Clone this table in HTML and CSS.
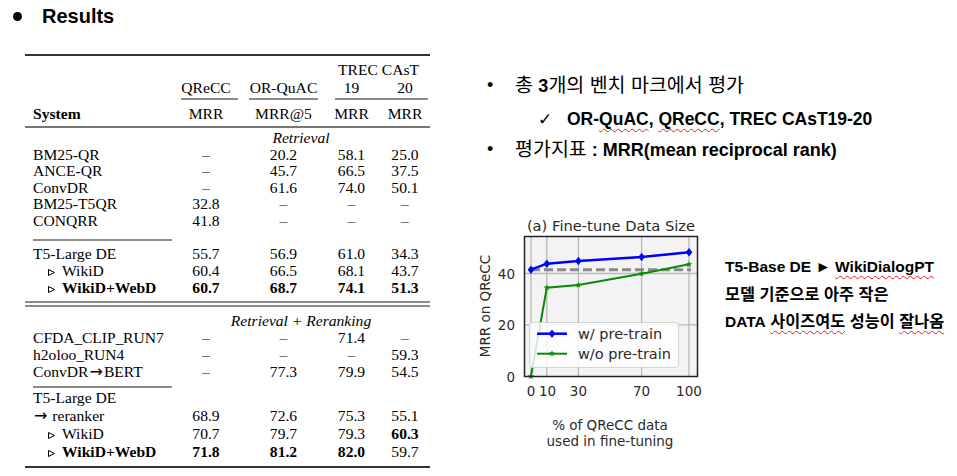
FILE: index.html
```html
<!DOCTYPE html>
<html lang="ko">
<head>
<meta charset="utf-8">
<title>Results</title>
<link rel="stylesheet" href="styles.css">
</head>
<body>
<header class="title"><span class="dot"></span><h1>Results</h1></header>
<main class="main">
  <section class="tbl">
    <div class="row hdr1"><span></span><span></span><span></span><span class="span2">TREC CAsT</span></div>
    <div class="row hdr2"><span></span><span>QReCC</span><span>OR-QuAC</span><span>19</span><span>20</span></div>
    <div class="row cmid"><span></span><i class="c2"></i><i class="c3"></i><i class="c45"></i></div>
    <div class="row hdr3"><b>System</b><span>MRR</span><span>MRR@5</span><span>MRR</span><span>MRR</span></div>

    <div class="sec sec1">
      <div class="row"><span></span><em class="grp">Retrieval</em></div>
      <div class="row"><span>BM25-QR</span><span>–</span><span>20.2</span><span>58.1</span><span>25.0</span></div>
      <div class="row"><span>ANCE-QR</span><span>–</span><span>45.7</span><span>66.5</span><span>37.5</span></div>
      <div class="row"><span>ConvDR</span><span>–</span><span>61.6</span><span>74.0</span><span>50.1</span></div>
      <div class="row"><span>BM25-T5QR</span><span>32.8</span><span>–</span><span>–</span><span>–</span></div>
      <div class="row"><span>CONQRR</span><span>41.8</span><span>–</span><span>–</span><span>–</span></div>
    </div>
    <div class="subrule r1"></div>
    <div class="sec sec2">
      <div class="row"><span>T5-Large DE</span><span>55.7</span><span>56.9</span><span>61.0</span><span>34.3</span></div>
      <div class="row"><span class="sub"><svg class="tri" width="7" height="7" viewBox="0 0 7 7"><polygon points="0.5,0.5 6.5,3.5 0.5,6.5"/></svg>WikiD</span><span>60.4</span><span>66.5</span><span>68.1</span><span>43.7</span></div>
      <div class="row bold"><span class="sub"><svg class="tri" width="7" height="7" viewBox="0 0 7 7"><polygon points="0.5,0.5 6.5,3.5 0.5,6.5"/></svg>WikiD+WebD</span><span>60.7</span><span>68.7</span><span>74.1</span><span>51.3</span></div>
    </div>
    <div class="dbl"></div>
    <div class="sec sec3">
      <div class="row"><span></span><em class="grp">Retrieval + Reranking</em></div>
      <div class="row"><span>CFDA<span class="us">_</span>CLIP<span class="us">_</span>RUN7</span><span>–</span><span>–</span><span>71.4</span><span>–</span></div>
      <div class="row"><span>h2oloo<span class="us">_</span>RUN4</span><span>–</span><span>–</span><span>–</span><span>59.3</span></div>
      <div class="row"><span>ConvDR<span class="arr">→</span>BERT</span><span>–</span><span>77.3</span><span>79.9</span><span>54.5</span></div>
    </div>
    <div class="subrule r2"></div>
    <div class="sec sec4">
      <div class="row h18"><span>T5-Large DE</span></div>
      <div class="row h18"><span><span class="arr">→</span> reranker</span><span>68.9</span><span>72.6</span><span>75.3</span><span>55.1</span></div>
      <div class="row h18"><span class="sub"><svg class="tri" width="7" height="7" viewBox="0 0 7 7"><polygon points="0.5,0.5 6.5,3.5 0.5,6.5"/></svg>WikiD</span><span>70.7</span><span>79.7</span><span>79.3</span><b>60.3</b></div>
      <div class="row h17"><b class="sub"><svg class="tri" width="7" height="7" viewBox="0 0 7 7"><polygon points="0.5,0.5 6.5,3.5 0.5,6.5"/></svg>WikiD+WebD</b><b>71.8</b><b>81.2</b><b>82.0</b><span>59.7</span></div>
    </div>
  </section>

  <section class="right">
    <ul class="bullets">
      <li class="b1"><span class="mark">•</span><span class="ko">총 <b>3</b>개의 벤치 마크에서 평가</span></li>
      <li class="chk"><span class="mark">✓</span><b>OR-<span class="spell">QuAC</span>, <span class="spell">QReCC</span>, TREC CAsT19-20</b></li>
      <li class="b1"><span class="mark">•</span><span class="ko">평가지표<b> : MRR(mean reciprocal rank)</b></span></li>
    </ul>
    <div class="figrow">
      <svg class="chart" width="245" height="245" viewBox="0 0 245 245">
        <defs>
          <path id="star" d="M0,-3.5 L0.82,-1.13 L3.33,-1.08 L1.33,0.43 L2.06,2.83 L0,1.4 L-2.06,2.83 L-1.33,0.43 L-3.33,-1.08 L-0.82,-1.13 Z"/>
          <path id="dia" d="M0,-4.2 L3.3,0 L0,4.2 L-3.3,0 Z"/>
        </defs>
        <rect x="54.5" y="29.5" width="173" height="140" fill="#f3f3f3"/>
        <g stroke="#b8b8b8" stroke-width="1.3">
          <line x1="61" y1="30" x2="61" y2="169"/>
          <line x1="76.8" y1="30" x2="76.8" y2="169"/>
          <line x1="108.4" y1="30" x2="108.4" y2="169"/>
          <line x1="171.6" y1="30" x2="171.6" y2="169"/>
          <line x1="219" y1="30" x2="219" y2="169"/>
          <line x1="55" y1="66.5" x2="227" y2="66.5"/>
          <line x1="55" y1="117.9" x2="227" y2="117.9"/>
        </g>
        <line x1="61" y1="62.7" x2="221" y2="62.7" stroke="#8a8a8a" stroke-width="3" stroke-dasharray="9 4"/>
        <polyline points="61,169.3 76.8,80.7 108.4,78 171.6,66.7 219,57.3" fill="none" stroke="#0a8a0a" stroke-width="2"/>
        <g fill="#0a8a0a">
          <use href="#star" x="61" y="169.3"/>
          <use href="#star" x="76.8" y="80.7"/>
          <use href="#star" x="108.4" y="78"/>
          <use href="#star" x="171.6" y="66.7"/>
          <use href="#star" x="219" y="57.3"/>
        </g>
        <polyline points="61,62.7 76.8,56.7 108.4,54 171.6,50 219,45.3" fill="none" stroke="#0000ff" stroke-width="2.5"/>
        <g fill="#0000ff">
          <use href="#dia" x="61" y="62.7"/>
          <use href="#dia" x="76.8" y="56.7"/>
          <use href="#dia" x="108.4" y="54"/>
          <use href="#dia" x="171.6" y="50"/>
          <use href="#dia" x="219" y="45.3"/>
        </g>
        <rect x="59.5" y="115.5" width="149" height="45" rx="3" fill="#ffffff" fill-opacity="0.82" stroke="#d4d4d4" stroke-width="1"/>
        <line x1="67" y1="126.7" x2="97" y2="126.7" stroke="#0000ff" stroke-width="2.5"/>
        <use href="#dia" x="82" y="126.7" fill="#0000ff"/>
        <line x1="67" y1="146.7" x2="97" y2="146.7" stroke="#0a8a0a" stroke-width="2"/>
        <use href="#star" x="82" y="146.7" fill="#0a8a0a"/>
        <rect x="54.5" y="29.5" width="173" height="140" fill="none" stroke="#222" stroke-width="1.5"/>
        <g class="ct">
          <text x="141" y="24" text-anchor="middle" class="ttl">(a) Fine-tune Data Size</text>
          <text x="108" y="131.5" class="lg">w/ pre-train</text>
          <text x="108" y="151.5" class="lg">w/o pre-train</text>
          <text x="45" y="71.5" text-anchor="end">40</text>
          <text x="45" y="123" text-anchor="end">20</text>
          <text x="45" y="174.5" text-anchor="end">0</text>
          <text x="61" y="189" text-anchor="middle">0</text>
          <text x="77.5" y="189" text-anchor="middle">10</text>
          <text x="108.4" y="189" text-anchor="middle">30</text>
          <text x="171.6" y="189" text-anchor="middle">70</text>
          <text x="219" y="189" text-anchor="middle">100</text>
          <text x="140" y="223" text-anchor="middle">% of QReCC data</text>
          <text x="140" y="239" text-anchor="middle">used in fine-tuning</text>
          <text transform="translate(20,99) rotate(-90)" text-anchor="middle">MRR on QReCC</text>
        </g>
      </svg>
      <div class="caption">
        <p><b>T5-Base DE ► <span class="spell">WikiDialogPT</span></b></p>
        <p class="ko">모델 기준으로 아주 작은</p>
        <p class="ko"><b>DATA</b> <span class="spell">사이즈여도</span> 성능이 <span class="spell">잘나옴</span></p>
      </div>
    </div>
  </section>
</main>
</body>
</html>
```

FILE: styles.css
```css
* { box-sizing: border-box; margin: 0; padding: 0; }

body {
  width: 957px;
  height: 476px;
  overflow: hidden;
  background: #fff;
  color: #000;
  font-family: "Liberation Sans", "Noto Sans CJK KR", Arial, sans-serif;
}

/* ---- title ---- */
.title {
  display: flex;
  align-items: center;
  height: 28px;
  padding-top: 4px;
}
.dot {
  width: 9px;
  height: 9px;
  border-radius: 50%;
  background: #000;
  margin-left: 13px;
  margin-right: 20px;
}
.title h1 {
  font-size: 20px;
  font-weight: 700;
  line-height: 24px;
}

/* ---- layout ---- */
.main {
  display: flex;
  align-items: flex-start;
}

/* ---- table ---- */
.tbl {
  margin-left: 25px;
  margin-top: 26px;
  width: 405px;
  border-top: 2px solid #333;
  border-bottom: 2px solid #333;
  font-family: "Liberation Serif", "Times New Roman", serif;
  font-size: 15.6px;
}
.row {
  display: grid;
  grid-template-columns: 147px 68px 87px 49px 54px;
  white-space: nowrap;
}
.row > * { text-align: center; }
.row > :first-child { text-align: left; padding-left: 8px; }
.row > :nth-child(5) { padding-left: 4px; }
.row b, .bold { font-weight: 700; }

.span2 { grid-column: 4 / 6; }
.grp { grid-column: 2 / 6; font-style: italic; text-align: center; }

.us { letter-spacing: -0.5px; }
.arr {
  font-family: "DejaVu Sans", sans-serif;
  font-size: 16px;
  line-height: 1;
  margin: 0 1px;
}

.hdr1 { padding-top: 5px; line-height: 17px; }
.hdr2 { line-height: 19px; }
.cmid { height: 2px; margin-top: 1px; }
.cmid i { display: block; height: 2px; background: #8c8c8c; }
.cmid .c2 { margin: 0 2px 0 9px; }
.cmid .c3 { margin: 0 9px 0 9px; }
.cmid .c45 { grid-column: 4 / 6; margin: 0 2px 0 8px; }
.hdr3 {
  margin-top: 4px;
  line-height: 20px;
  padding-bottom: 2px;
  border-bottom: 2px solid #777;
}

.sec1 { padding-top: 2px; }
.sec1 .row { line-height: 16.5px; }
.subrule { margin-left: 8px; width: 139px; height: 2px; background: #8c8c8c; }
.subrule.r1 { margin-top: 10px; }
.sec2 { margin-top: 4px; }
.sec2 .row, .sec3 .row { line-height: 17px; }
.dbl {
  margin-top: 5px;
  height: 6px;
  border-top: 2px solid #8c8c8c;
  border-bottom: 2px solid #8c8c8c;
}
.sec3 { margin-top: 5px; }
.subrule.r2 { margin-top: 6px; }
.sec4 { margin-top: 1px; padding-bottom: 6px; }
.h18 { line-height: 18px; }
.h17 { line-height: 17px; }

.row > .sub { padding-left: 23px; }
.tri { margin-right: 7px; vertical-align: baseline; }
.tri polygon { fill: none; stroke: #000; stroke-width: 1; }

/* ---- right column ---- */
.right {
  margin-left: 40px;
  width: 487px;
}
.bullets {
  list-style: none;
  padding-top: 42px;
  font-size: 18px;
}
.bullets li {
  display: flex;
  line-height: 30px;
  white-space: nowrap;
}
.bullets .ko { font-size: 19.5px; }
.bullets .ko b { font-size: 18px; }
.bullets .b1 { padding-left: 17px; }
.bullets .b1 .mark { width: 28px; }
.bullets .chk { padding-left: 68px; margin-top: 3px; font-size: 17.5px; }
.bullets .chk .mark {
  width: 29px;
  font-family: "DejaVu Sans", sans-serif;
  font-size: 17px;
}

.spell {
  text-decoration: underline wavy #e02020;
  text-decoration-thickness: 1px;
  text-underline-offset: 3px;
  text-decoration-skip-ink: none;
}

.figrow {
  display: flex;
  align-items: flex-start;
  margin-top: 42px;
}
.chart { display: block; flex: none; }
.ct text {
  font-family: "DejaVu Sans", sans-serif;
  font-size: 13.5px;
  fill: #2a2a2a;
}
.ct .ttl { font-size: 14.7px; }
.ct .lg { font-size: 14.5px; }

.caption {
  margin-left: 10px;
  padding-top: 46px;
  font-size: 15.5px;
  line-height: 27.5px;
  font-weight: 700;
  white-space: nowrap;
}
.caption .ko { font-size: 16.3px; }
.caption .ko b { font-size: 15.5px; }
```
